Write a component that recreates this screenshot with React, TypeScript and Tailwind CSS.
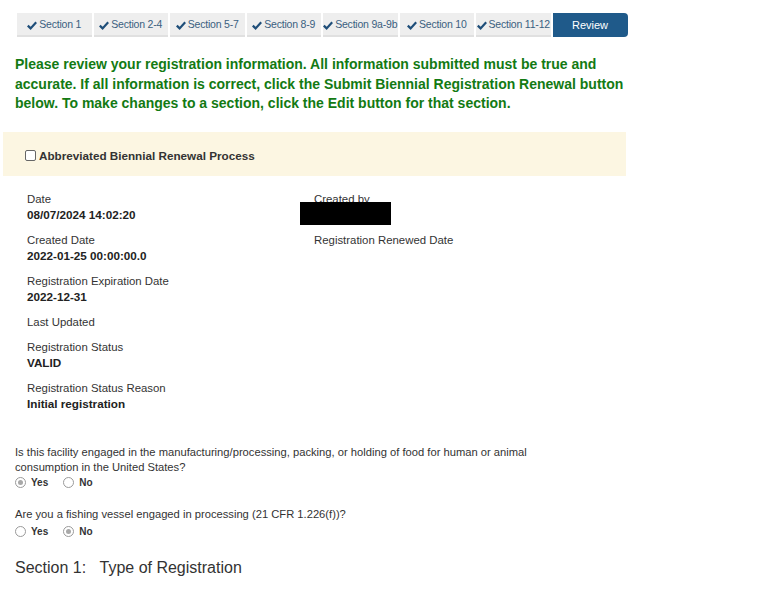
import React from "react";

const tabs = ["Section 1", "Section 2-4", "Section 5-7", "Section 8-9", "Section 9a-9b", "Section 10", "Section 11-12"];

function Check() {
  return (
    <svg width="10" height="9" viewBox="0 0 10 9" className="mr-[2px] shrink-0">
      <path d="M0.8 4.6 L3.6 7.4 L9.2 1.2" stroke="#1f4e79" strokeWidth="2.2" fill="none" />
    </svg>
  );
}

function Radio({ checked }: { checked?: boolean }) {
  return (
    <span className="inline-flex w-[11px] h-[11px] rounded-full border border-[#9a9a9a] bg-white items-center justify-center mr-[5px]">
      {checked && <span className="w-[5px] h-[5px] rounded-full bg-[#a8a8a8]" />}
    </span>
  );
}

function Field({ label, value }: { label: string; value?: string }) {
  return (
    <div className={value ? "h-[41px]" : "h-[25px]"}>
      <div className="text-[11.4px] leading-[16px] text-[#333]">{label}</div>
      {value && <div className="text-[11.7px] leading-[15px] font-bold text-[#222]">{value}</div>}
    </div>
  );
}

export default function App() {
  return (
    <div className="w-[780px] h-[591px] bg-white overflow-hidden" style={{ fontFamily: '"Liberation Sans", Arial, sans-serif' }}>
      <div className="flex pl-[17px] pt-[13px] gap-[2px]">
        {tabs.map((t) => (
          <div key={t} className="w-[74.5px] h-[24px] pt-[2px] bg-[#eeeeee] border-b-[2px] border-[#e0e0e0] flex items-center justify-center whitespace-nowrap text-[10.5px] tracking-[-0.2px] text-[#3a5f80]">
            <Check />
            {t}
          </div>
        ))}
        <div className="w-[75px] h-[24px] pt-[1px] bg-[#1f5a8a] rounded-r-[4px] flex items-center justify-center text-[11px] text-white">
          Review
        </div>
      </div>

      <div className="px-[15px] pt-[18px] text-[14px] leading-[19.5px] font-bold text-[#137a13] w-[640px]">
        Please review your registration information. All information submitted must be true and accurate. If all information is correct, click the Submit Biennial Registration Renewal button below. To make changes to a section, click the Edit button for that section.
      </div>

      <div className="ml-[3px] mt-[18px] w-[623px] h-[44px] pt-[4px] bg-[#fcf6e2] flex items-center pl-[22px]">
        <span className="w-[11px] h-[11px] border border-[#666] rounded-[2px] bg-white mr-[3px]" />
        <span className="text-[11.7px] font-bold text-[#333]">Abbreviated Biennial Renewal Process</span>
      </div>

      <div className="flex pl-[27px] pt-[15px]">
        <div className="w-[287px]">
          <Field label="Date" value="08/07/2024 14:02:20" />
          <Field label="Created Date" value="2022-01-25 00:00:00.0" />
          <Field label="Registration Expiration Date" value="2022-12-31" />
          <Field label="Last Updated" />
          <Field label="Registration Status" value="VALID" />
          <Field label="Registration Status Reason" value="Initial registration" />
        </div>
        <div>
          <div className="h-[41px] relative">
            <div className="text-[11.4px] leading-[16px] text-[#333]">Created by</div>
            <div className="absolute left-[-14px] top-[11px] w-[91px] h-[23px] bg-black" />
          </div>
          <Field label="Registration Renewed Date" />
        </div>
      </div>

      <div className="pl-[15px] pt-[24px] text-[11.2px] text-[#333]">
        <div className="leading-[15px] w-[540px]">
          Is this facility engaged in the manufacturing/processing, packing, or holding of food for human or animal consumption in the United States?
        </div>
        <div className="flex items-center h-[16px] font-bold text-[10px]">
          <label className="flex items-center mr-[15px]"><Radio checked />Yes</label>
          <label className="flex items-center"><Radio />No</label>
        </div>
        <div className="leading-[15px] mt-[16px]">Are you a fishing vessel engaged in processing (21 CFR 1.226(f))?</div>
        <div className="flex items-center h-[18px] mt-[1px] font-bold text-[10px]">
          <label className="flex items-center mr-[15px]"><Radio />Yes</label>
          <label className="flex items-center"><Radio checked />No</label>
        </div>
        <div className="mt-[17px] text-[16px] text-[#333] leading-[20px]">
          Section 1:&nbsp;&nbsp;&nbsp;Type of Registration
        </div>
      </div>
    </div>
  );
}
